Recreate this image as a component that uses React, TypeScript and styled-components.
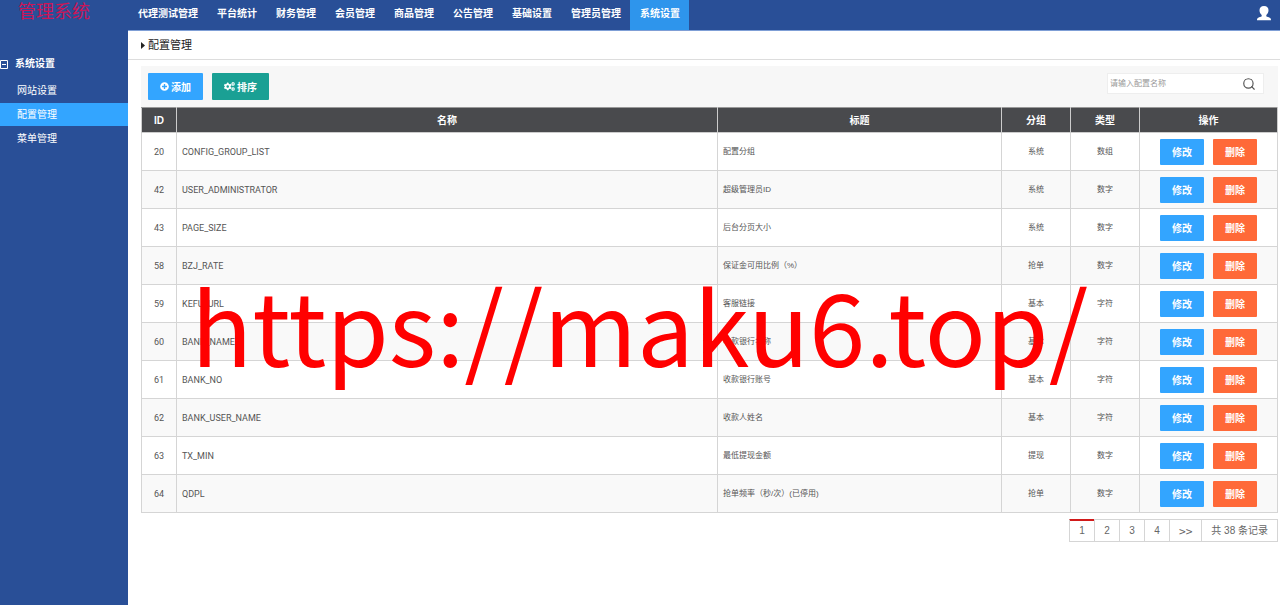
import React from "react";
import styled, { createGlobalStyle } from "styled-components";
import { FaCogs, FaPlusCircle } from "react-icons/fa";
import { FiSearch } from "react-icons/fi";

const GlobalStyle = createGlobalStyle`
  * { box-sizing: border-box; }
  body {
    margin: 0;
    background: #fff;
    color: #555;
    font: 8px/12px "Liberation Sans", "Noto Sans CJK SC", sans-serif;
  }
  a { color: inherit; text-decoration: none; }
  button, input { font-family: inherit; }
`;

const Shell = styled.div`
  display: grid;
  grid-template-columns: 128px minmax(0, 1fr);
  min-height: 100vh;
  position: relative;
`;

const Sidebar = styled.aside`
  background: #294f97;
  color: #fff;
`;

const Brand = styled.div`
  height: 50px;
  padding: 2px 0 0 18px;
  color: #cc1557;
  font-size: 18px;
  line-height: 20px;
`;

const MenuGroup = styled.h2`
  display: flex;
  align-items: center;
  gap: 7px;
  margin: 0;
  height: 28px;
  font-size: 10px;
`;

const Menu = styled.div`
  display: grid;
  gap: 1px;
  padding-top: 1px;
`;

const MenuLink = styled.a<{ $active?: boolean }>`
  padding-left: 17px;
  font-size: 10px;
  line-height: 23px;
  background: ${(p) => (p.$active ? "#33a5ff" : "transparent")};
`;

const Main = styled.div`
  min-width: 0;
`;

const Header = styled.header`
  display: flex;
  justify-content: space-between;
  height: 31px;
  background: #294f97;
  border-bottom: 1px solid #7f9fd6;
  color: #fff;
`;

const Nav = styled.nav`
  display: flex;
`;

const NavLink = styled.a<{ $active?: boolean }>`
  padding: 0 9px 0 10px;
  font-size: 10px;
  font-weight: bold;
  line-height: 27px;
  white-space: nowrap;
  background: ${(p) => (p.$active ? "#2e95ec" : "transparent")};
`;

const UserButton = styled.button`
  display: flex;
  padding: 6px 8px 0 0;
  border: 0;
  background: none;
  color: #fff;
`;

const PageTitle = styled.h1`
  display: flex;
  align-items: center;
  gap: 3px;
  height: 29px;
  margin: 0;
  padding-left: 13px;
  border-bottom: 1px solid #ddd;
  color: #222;
  font-size: 11px;
  font-weight: normal;
`;

const Content = styled.main`
  padding: 6px 2px 0 13px;
`;

const Toolbar = styled.div`
  display: flex;
  gap: 9px;
  height: 41px;
  padding: 7px 14px 0 7px;
  background: #f7f7f7;
`;

const ToolButton = styled.button<{ $color: string }>`
  display: flex;
  align-items: center;
  gap: 2px;
  height: 27px;
  padding: 0 12px;
  border: 0;
  border-radius: 1px;
  background: ${(p) => p.$color};
  color: #fff;
  font-size: 10px;
  font-weight: bold;
`;

const Search = styled.form`
  display: flex;
  align-items: center;
  width: 157px;
  height: 21px;
  margin-left: auto;
  border: 1px solid #eee;
  background: #fff;
`;

const SearchInput = styled.input`
  flex: 1;
  min-width: 0;
  padding: 0 2px;
  border: 0;
  background: none;
  font-size: 8px;
  &::placeholder { color: #999; }
`;

const SearchButton = styled.button`
  display: flex;
  padding: 1px 7px 0 0;
  border: 0;
  background: none;
  color: #555;
`;

const Table = styled.table`
  width: 100%;
  table-layout: fixed;
  border-collapse: collapse;
`;

const HeadCell = styled.th<{ $width?: string }>`
  width: ${(p) => p.$width || "auto"};
  height: 25px;
  padding: 1px 0 0;
  border: 1px solid #ccc;
  border-top-color: #999;
  background: #494a4d;
  color: #fff;
  font-size: 10px;
`;

const Row = styled.tr`
  height: 38px;
  &:nth-child(even) { background: #f9f9f9; }
`;

const Cell = styled.td<{ $center?: boolean; $latin?: boolean }>`
  padding: 0 5px;
  border: 1px solid #d5d5d5;
  text-align: ${(p) => (p.$center ? "center" : "left")};
  ${(p) => p.$latin && `font-family: Roboto, sans-serif; font-size: 9px;`}
`;

const Actions = styled.div`
  display: flex;
  justify-content: center;
  gap: 9px;
`;

const ActionButton = styled.button<{ $danger?: boolean }>`
  width: 44px;
  height: 26px;
  padding: 0;
  border: 0;
  border-radius: 1px;
  background: ${(p) => (p.$danger ? "#ff6938" : "#33a5ff")};
  color: #fff;
  font-size: 10px;
  font-weight: bold;
`;

const Pager = styled.nav`
  display: flex;
  justify-content: flex-end;
  margin-top: 6px;
  font-size: 10px;
  line-height: 21px;
  color: #666;
`;

const pageCell = `
  height: 23px;
  border: 1px solid #d5d5d5;
  margin-left: -1px;
`;

const PageLink = styled.a<{ $active?: boolean }>`
  ${pageCell}
  padding: 0 9px;
  min-width: 26px;
  text-align: center;
  box-shadow: ${(p) => (p.$active ? "inset 0 1px #d11a1a" : "none")};
  border-top-color: ${(p) => (p.$active ? "#d11a1a" : "#d5d5d5")};
`;

const NextLink = styled(PageLink)`
  font-family: "Noto Sans CJK SC", sans-serif;
  font-size: 12px;
`;

const PageTotal = styled.span`
  ${pageCell}
  padding: 0 9px;
`;

const Watermark = styled.div`
  position: absolute;
  left: 191px;
  top: 248px;
  color: #f00;
  font: 101px/150px "Noto Sans CJK SC", sans-serif;
  white-space: nowrap;
  pointer-events: none;
`;

const navItems = ["代理测试管理", "平台统计", "财务管理", "会员管理", "商品管理", "公告管理", "基础设置", "管理员管理", "系统设置"];
const menuItems = ["网站设置", "配置管理", "菜单管理"];
const rows = [
  [20, "CONFIG_GROUP_LIST", "配置分组", "系统", "数组"],
  [42, "USER_ADMINISTRATOR", "超级管理员ID", "系统", "数字"],
  [43, "PAGE_SIZE", "后台分页大小", "系统", "数字"],
  [58, "BZJ_RATE", "保证金可用比例（%）", "抢单", "数字"],
  [59, "KEFU_URL", "客服链接", "基本", "字符"],
  [60, "BANK_NAME", "收款银行名称", "基本", "字符"],
  [61, "BANK_NO", "收款银行账号", "基本", "字符"],
  [62, "BANK_USER_NAME", "收款人姓名", "基本", "字符"],
  [63, "TX_MIN", "最低提现金额", "提现", "数字"],
  [64, "QDPL", "抢单频率（秒/次）(已停用)", "抢单", "数字"],
];

const UserIcon = () => (
  <svg width="16" height="15" viewBox="0 0 16 15" fill="currentColor" aria-hidden="true">
    <path d="M8 0C5 0 3.500 1.700 3.500 4.300c0 2.100.9 3.700 2.200 4.700v1.300c-.5.600-2.900 1-4.100 1.900C.9 12.800 1 14.300 1 14.300h14s.1-1.500-.6-2.100c-1.200-.9-3.600-1.300-4.100-1.900V9c1.300-1 2.200-2.600 2.200-4.700C12.500 1.700 11 0 8 0z" />
  </svg>
);

const CollapseIcon = () => (
  <svg width="8" height="9" viewBox="0 0 8 9" fill="none" stroke="currentColor" aria-hidden="true">
    <path d="M.5 .5h7v8h-7zM2 4.500h4" />
  </svg>
);

const CaretIcon = () => (
  <svg width="4" height="7" viewBox="0 0 4 7" fill="currentColor" aria-hidden="true">
    <path d="M0 0l4 3.500L0 7z" />
  </svg>
);

export default function App() {
  return (
    <>
      <GlobalStyle />
      <Shell>
        <Sidebar>
          <Brand>管理系统</Brand>
          <MenuGroup><CollapseIcon />系统设置</MenuGroup>
          <Menu>
            {menuItems.map((item) => (
              <MenuLink key={item} href="#" $active={item === "配置管理"}>{item}</MenuLink>
            ))}
          </Menu>
        </Sidebar>
        <Main>
          <Header>
            <Nav>
              {navItems.map((item) => (
                <NavLink key={item} href="#" $active={item === "系统设置"}>{item}</NavLink>
              ))}
            </Nav>
            <UserButton aria-label="用户"><UserIcon /></UserButton>
          </Header>
          <PageTitle><CaretIcon />配置管理</PageTitle>
          <Content>
            <Toolbar>
              <ToolButton $color="#33a5ff"><FaPlusCircle size={9} />添加</ToolButton>
              <ToolButton $color="#1aa094"><FaCogs size={11} />排序</ToolButton>
              <Search>
                <SearchInput aria-label="配置名称" placeholder="请输入配置名称" />
                <SearchButton type="button" aria-label="搜索"><FiSearch size={14} /></SearchButton>
              </Search>
            </Toolbar>
            <Table>
              <thead>
                <tr>
                  <HeadCell $width="35px">ID</HeadCell>
                  <HeadCell>名称</HeadCell>
                  <HeadCell $width="25%">标题</HeadCell>
                  <HeadCell $width="69px">分组</HeadCell>
                  <HeadCell $width="69px">类型</HeadCell>
                  <HeadCell $width="138px">操作</HeadCell>
                </tr>
              </thead>
              <tbody>
                {rows.map(([id, name, title, group, type]) => (
                  <Row key={id}>
                    <Cell $center $latin>{id}</Cell>
                    <Cell $latin>{name}</Cell>
                    <Cell>{title}</Cell>
                    <Cell $center>{group}</Cell>
                    <Cell $center>{type}</Cell>
                    <Cell>
                      <Actions>
                        <ActionButton>修改</ActionButton>
                        <ActionButton $danger>删除</ActionButton>
                      </Actions>
                    </Cell>
                  </Row>
                ))}
              </tbody>
            </Table>
            <Pager aria-label="分页">
              <PageLink href="#" $active>1</PageLink>
              <PageLink href="#">2</PageLink>
              <PageLink href="#">3</PageLink>
              <PageLink href="#">4</PageLink>
              <NextLink href="#">&gt;&gt;</NextLink>
              <PageTotal>共 38 条记录</PageTotal>
            </Pager>
          </Content>
        </Main>
        <Watermark>https://maku6.top/</Watermark>
      </Shell>
    </>
  );
}
